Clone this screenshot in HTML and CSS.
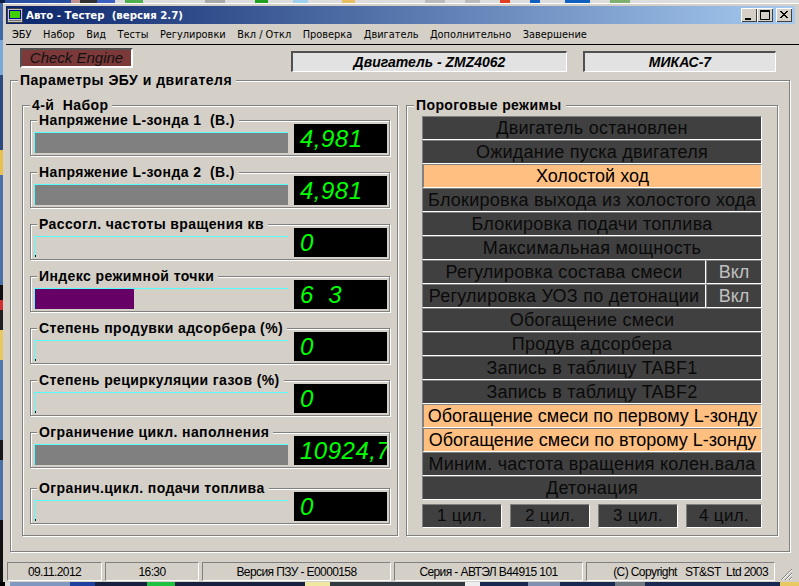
FILE: index.html
```html
<!DOCTYPE html>
<html lang="ru">
<head>
<meta charset="utf-8">
<title>Авто - Тестер</title>
<link rel="stylesheet" href="styles.css">
</head>
<body>
<div class="desk-top"></div>
<div class="window">
  <div class="titlebar">
    <svg class="appicon" width="16" height="15" viewBox="0 0 16 15"><rect x="0.5" y="0.5" width="15" height="14" fill="#c8c8c8" stroke="#404040"/><rect x="2.5" y="2.5" width="11" height="8" fill="#40d000" stroke="#0000a0"/><rect x="2" y="12" width="12" height="1" fill="#707070"/></svg>
    <span class="title">Авто - Тестер&nbsp; (версия 2.7)</span>
    <div class="winbtns">
      <span class="winbtn"><svg width="16" height="14" viewBox="0 0 16 14"><rect x="4" y="10" width="6" height="2" fill="#000"/></svg></span>
      <span class="winbtn"><svg width="16" height="14" viewBox="0 0 16 14"><path d="M3.5 2.5H12.5V11.5H3.5Z" fill="none" stroke="#000"/><rect x="3" y="2" width="10" height="2" fill="#000"/></svg></span>
      <span class="winbtn close"><svg width="16" height="14" viewBox="0 0 16 14"><path d="M4 3L11 10M5 3L12 10M11 3L4 10M12 3L5 10" stroke="#000" fill="none"/></svg></span>
    </div>
  </div>
  <div class="menubar">
    <span>ЭБУ</span><span>Набор</span><span>Вид</span><span>Тесты</span><span>Регулировки</span><span>Вкл / Откл</span><span>Проверка</span><span>Двигатель</span><span>Дополнительно</span><span>Завершение</span>
  </div>
  <div class="infobar">
    <div class="check">Check Engine</div>
    <div class="infopanel engine">Двигатель - ZMZ4062</div>
    <div class="infopanel ecu">МИКАС-7</div>
  </div>
  <div class="group outer">
    <span class="legend big">Параметры ЭБУ и двигателя</span>
    <div class="group left">
      <span class="legend">4-й&nbsp; Набор</span>
      <div class="group gauge"><span class="legend">Напряжение L-зонда 1&nbsp; (В.)</span><div class="bar"><div class="fill"></div></div><div class="lcd">4,981</div></div>
      <div class="group gauge"><span class="legend">Напряжение L-зонда 2&nbsp; (В.)</span><div class="bar"><div class="fill"></div></div><div class="lcd">4,981</div></div>
      <div class="group gauge"><span class="legend">Рассогл. частоты вращения кв</span><div class="bar"></div><div class="lcd">0</div></div>
      <div class="group gauge"><span class="legend">Индекс режимной точки</span><div class="bar"><div class="fill purple"></div></div><div class="lcd">6&nbsp; 3</div></div>
      <div class="group gauge"><span class="legend">Степень продувки адсорбера (%)</span><div class="bar"></div><div class="lcd">0</div></div>
      <div class="group gauge"><span class="legend">Степень рециркуляции газов (%)</span><div class="bar"></div><div class="lcd">0</div></div>
      <div class="group gauge"><span class="legend">Ограничение цикл. наполнения</span><div class="bar"><div class="fill"></div></div><div class="lcd">10924,7</div></div>
      <div class="group gauge last"><span class="legend">Огранич.цикл. подачи топлива</span><div class="bar"></div><div class="lcd">0</div></div>
    </div>
    <div class="group right">
      <span class="legend">Пороговые режимы</span>
      <div class="row">Двигатель остановлен</div>
      <div class="row">Ожидание пуска двигателя</div>
      <div class="row on">Холостой ход</div>
      <div class="row">Блокировка выхода из холостого хода</div>
      <div class="row">Блокировка подачи топлива</div>
      <div class="row">Максимальная мощность</div>
      <div class="splitrow"><div class="row">Регулировка состава смеси</div><div class="toggle">Вкл</div></div>
      <div class="splitrow"><div class="row">Регулировка УОЗ по детонации</div><div class="toggle">Вкл</div></div>
      <div class="row">Обогащение смеси</div>
      <div class="row">Продув адсорбера</div>
      <div class="row">Запись в таблицу TABF1</div>
      <div class="row">Запись в таблицу TABF2</div>
      <div class="row on">Обогащение смеси по первому L-зонду</div>
      <div class="row on">Обогащение смеси по второму L-зонду</div>
      <div class="row">Миним. частота вращения колен.вала</div>
      <div class="row">Детонация</div>
      <div class="cyls"><div class="row cyl">1 цил.</div><div class="row cyl">2 цил.</div><div class="row cyl">3 цил.</div><div class="row cyl">4 цил.</div></div>
    </div>
  </div>
  <div class="statusbar">
    <div class="cell c1">09.11.2012</div>
    <div class="cell c2">16:30</div>
    <div class="cell c3">Версия ПЗУ - E0000158</div>
    <div class="cell c4">Серия - АВТЭЛ В44915 101</div>
    <div class="cell c5">(C) Copyright &nbsp; ST&amp;ST&nbsp; Ltd 2003</div>
    <svg class="grip" width="14" height="14" viewBox="0 0 14 14"><path d="M13 2L2 13M13 6L6 13M13 10L10 13" stroke="#808080" fill="none"/><path d="M13 3L3 13M13 7L7 13M13 11L11 13" stroke="#fff" fill="none"/></svg>
  </div>
</div>
<div class="desk-bottom"></div>
</body>
</html>
```
FILE: styles.css
```css
* { box-sizing: border-box; }
html, body { margin: 0; padding: 0; }
body {
  width: 799px; height: 586px; overflow: hidden;
  background: linear-gradient(180deg, #3f68a8 0 40px, #7aa8d8 40px 75px, #2a4a80 75px 150px, #e8c050 150px 175px, #4a70a8 175px 285px, #101010 285px 300px, #d03030 300px 310px, #202020 310px 330px, #e8c860 330px 360px, #5078b0 360px 440px, #181818 440px 460px, #4a70a8 460px 520px, #101010 520px 586px);
  font-family: "Liberation Sans", sans-serif;
  color: #000;
}
.desk-top {
  height: 3px;
  background: linear-gradient(90deg, #102040 0 5px, #2a50a0 5px 71px, #c09090 71px 80px, #303030 80px 97px, #3a60c0 97px 115px, #ddd 115px 125px, #50b050 125px 143px, #ddd 143px 205px, #aaa 205px 225px, #ddd 225px 255px, #20a020 255px 268px, #ddd 268px 293px, #a0d0f0 293px 308px, #ddd 308px 342px, #e8c060 342px 355px, #ddd 355px 425px, #bbb 425px 445px, #ddd 445px 465px, #bbb 465px 480px, #ddd 480px 500px, #e04020 500px 510px, #ddd 510px 530px, #1060c0 530px 540px, #ddd 540px 565px, #1060c0 565px 590px, #ddd 590px 610px, #80b070 610px 630px, #ddd 630px 799px);
}
.window {
  margin-left: 3px; width: 796px; height: 579px;
  padding: 2px 0 0 3px;
  background: #d4d0c8;
  border-top: 1px solid #fff;
}
.titlebar {
  height: 18px; width: 789px;
  display: flex; align-items: center;
  padding: 0 3px 0 1px;
  background: linear-gradient(90deg, #0a246a, #a6caf0);
  color: #fff;
}
.appicon { flex: none; margin-right: 3px; }
.title { font: bold 10.2px "DejaVu Sans", sans-serif; white-space: pre; }
.winbtns { margin-left: auto; display: flex; }
.winbtn {
  width: 16px; height: 14px; background: #d4d0c8;
  box-shadow: inset 1px 1px 0 #fff, inset -1px -1px 0 #404040;
  display: block;
}
.winbtn svg { display: block; }
.winbtn.close { margin-left: 3px; }
.menubar {
  height: 20px; margin-top: 1px;
  display: flex; align-items: center;
  padding-left: 6px; gap: 11.5px;
  font: 9.8px "DejaVu Sans", sans-serif;
  border-bottom: 1px solid #000;
}
.infobar {
  display: flex; align-items: flex-start;
  height: 35px; padding: 3px 0 0 14px;
}
.check {
  width: 113px; height: 20px;
  background: #7b3939;
  border: 2px solid; border-color: #505050 #fff #fff #505050;
  font: italic 15px "Liberation Sans", sans-serif;
  text-align: center; line-height: 16px; color: #111;
}
.infopanel {
  height: 21px; margin-top: 3px;
  background: #e2e2e2;
  border: 1px solid; border-width: 2px 1px 1px 2px;
  border-color: #505050 #fff #fff #505050;
  font: italic bold 14px "Liberation Sans", sans-serif;
  text-align: center; line-height: 18px;
}
.engine { width: 276px; margin-left: 158px; }
.ecu { width: 193px; margin-left: 16px; }
.group {
  position: relative;
  border: 1px solid #808080;
  box-shadow: inset 1px 1px 0 #fff, 1px 1px 0 #fff;
}
.legend {
  position: absolute; left: 7px; top: -8px;
  height: 15px; padding: 0 4px 0 2px;
  background: #d4d0c8;
  font: bold 14px/15px "Liberation Sans", sans-serif;
  letter-spacing: .4px;
  white-space: nowrap;
}
.gauge > .legend { left: 6px; }
.legend.big { letter-spacing: .5px; }
.outer {
  width: 780px; height: 472px; margin-left: 4px;
  display: flex; align-items: flex-start;
  padding: 24px 0 0 11px; gap: 8px;
}
.left {
  width: 376px; height: 431px;
  padding: 14px 0 0 7px;
  display: flex; flex-direction: column; gap: 16px;
}
.gauge {
  width: 360px; height: 36px; flex: none;
  display: flex; align-items: flex-end;
  padding: 0 3px 2px 3px; gap: 6px;
}
.gauge.last { margin-top: 4px; }
.bar {
  width: 254px; height: 21px; flex: none;
  border-top: 1px solid #55ffff; border-left: 1px solid #55ffff;
  background: linear-gradient(#000, #000) left bottom / 1px 2px no-repeat;
}
.fill { height: 100%; background: #808080; }
.fill.purple { width: 39%; background: #660066; }
.lcd {
  width: 93px; height: 29px; flex: none;
  background: #000; color: #0f0;
  font: italic 24px/30px "Liberation Sans", sans-serif;
  letter-spacing: .5px;
  padding-left: 6px; overflow: hidden; white-space: pre;
}
.right {
  width: 372px; height: 431px;
  padding: 10px 15px 0 15px;
}
.row {
  height: 24px;
  background: #404040; color: #0a0a0a;
  border: 1px solid; border-color: #808080 #fff #fff #808080;
  font: 18px/23px "Liberation Sans", sans-serif;
  letter-spacing: .25px;
  text-align: center; white-space: nowrap; overflow: hidden;
}
.row.on { background: #ffbf80; color: #000; border-left-width: 2px; letter-spacing: 0; }
.splitrow { display: flex; }
.splitrow .row { width: 284px; flex: none; }
.toggle {
  flex: 1; height: 24px;
  background: #404040; color: #c0c0c0;
  font: 18px/23px "Liberation Sans", sans-serif;
  text-align: center;
  border: 1px solid; border-color: #808080 #fff #fff #808080;
}
.cyls { display: flex; gap: 8px; margin-top: 4px; }
.row.cyl { width: 80px; font-size: 17px; line-height: 22px; letter-spacing: .3px; }
.row.cyl:last-child { width: 76px; }
.statusbar {
  display: flex; align-items: flex-start; gap: 3px;
  height: 20px; margin-top: 10px;
  font: 12px/18px "Liberation Sans", sans-serif;
  letter-spacing: -.6px;
}
.cell {
  height: 19px; text-align: center;
  border: 1px solid; border-color: #808080 #fff #fff #808080;
}
.c1 { width: 95px; margin-left: 1px; }
.c2 { width: 94px; }
.c3 { width: 189px; }
.c4 { width: 189px; }
.c5 { width: 189px; text-align: right; padding-right: 6px; }
.grip { margin-left: 1px; margin-top: 5px; }
.desk-bottom {
  height: 4px;
  background: linear-gradient(90deg, #000 0 5px, #ddd 5px 10px, #8098c0 10px 70px, #2040a0 70px 95px, #182040 95px 147px, #20c040 147px 175px, #182040 175px 305px, #f0e8a0 305px 330px, #303840 330px 465px, #eee 465px 480px, #182850 480px 528px, #8090b0 528px 560px, #182850 560px 615px, #707880 615px 645px, #182850 645px 780px, #e8c860 780px 799px);
}
```
